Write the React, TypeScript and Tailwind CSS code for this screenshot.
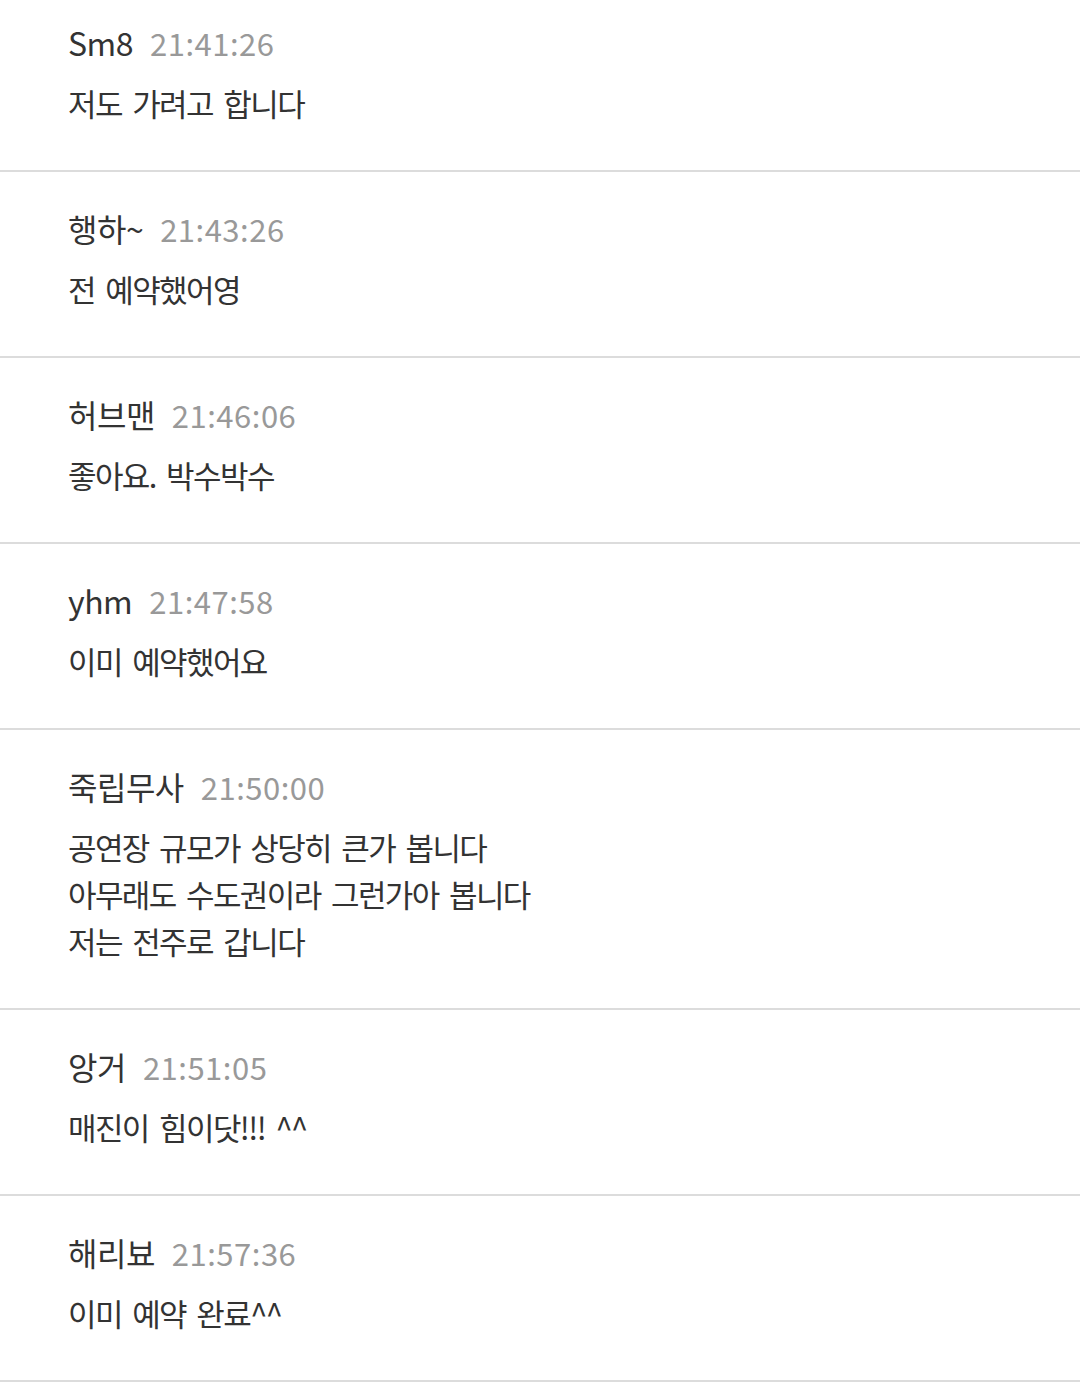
const comments = [
  { name: "Sm8", time: "21:41:26", lines: ["저도 가려고 합니다"] },
  { name: "행하~", time: "21:43:26", lines: ["전 예약했어영"] },
  { name: "허브맨", time: "21:46:06", lines: ["좋아요. 박수박수"] },
  { name: "yhm", time: "21:47:58", lines: ["이미 예약했어요"] },
  {
    name: "죽립무사",
    time: "21:50:00",
    lines: ["공연장 규모가 상당히 큰가 봅니다", "아무래도 수도권이라 그런가아 봅니다", "저는 전주로 갑니다"],
  },
  { name: "앙거", time: "21:51:05", lines: ["매진이 힘이닷!!! ^^"] },
  { name: "해리뵤", time: "21:57:36", lines: ["이미 예약 완료^^"] },
];

export default function App() {
  return (
    <div
      className="w-[1080px] h-[1384px] overflow-hidden bg-white text-[#333]"
      style={{ fontFamily: '"Noto Sans CJK KR", "Noto Sans", sans-serif' }}
    >
      {comments.map((c, i) => (
        <div
          key={i}
          className={`border-b-2 border-[#dcdcdc] pl-[68px] pr-6 pb-[44px] ${i === 0 ? "pt-[19px]" : "pt-[33px]"}`}
        >
          <div className="flex items-baseline gap-[17px] leading-[47px]">
            <span className="text-[32px] tracking-[-0.5px]">{c.name}</span>
            <span className="text-[31px] text-[#999] tracking-[0.5px]">{c.time}</span>
          </div>
          <div className="mt-[13px] text-[31px] leading-[47px] tracking-[-1.6px] [word-spacing:5px]">
            {c.lines.map((l, j) => (
              <div key={j}>{l}</div>
            ))}
          </div>
        </div>
      ))}
    </div>
  );
}
